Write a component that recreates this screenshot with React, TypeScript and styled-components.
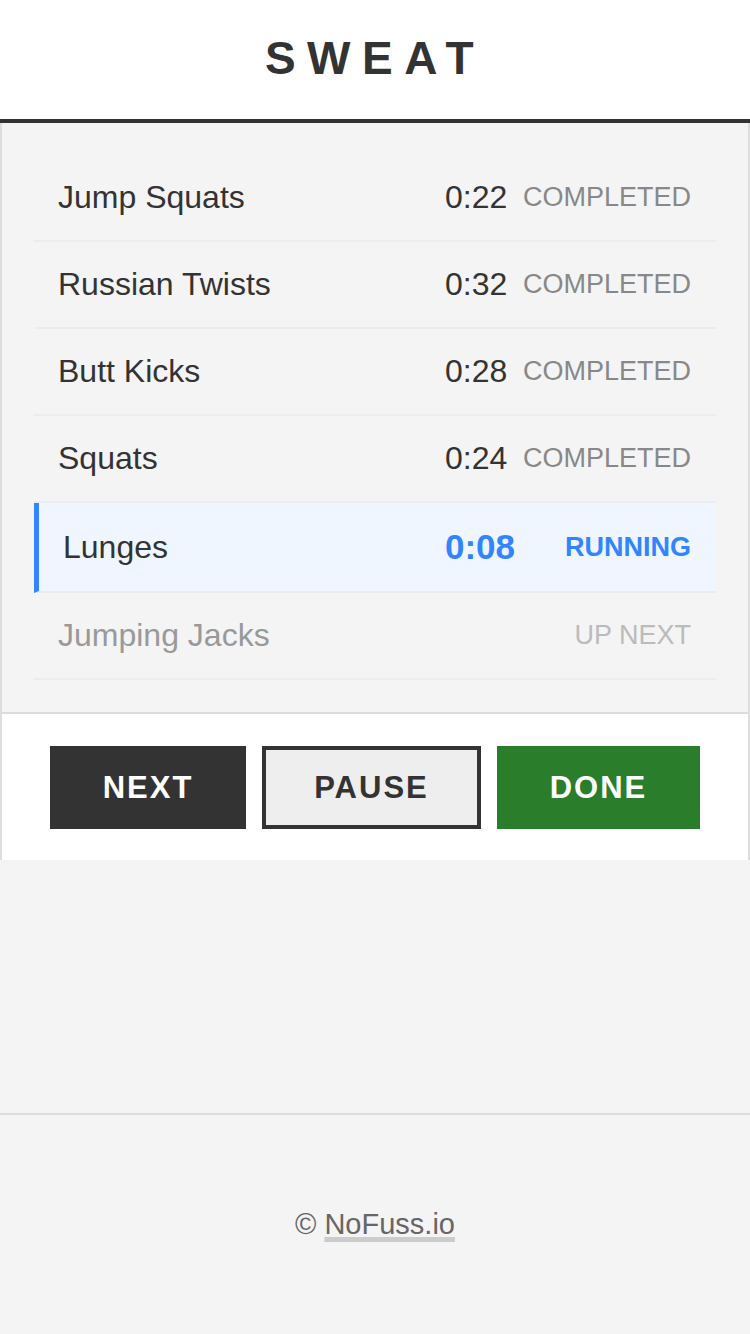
import { createGlobalStyle } from "styled-components";
import styled, { css } from "styled-components";

type Status = "completed" | "running" | "next";

interface Exercise {
  name: string;
  time?: string;
  status: Status;
}

const exercises: Exercise[] = [
  { name: "Jump Squats", time: "0:22", status: "completed" },
  { name: "Russian Twists", time: "0:32", status: "completed" },
  { name: "Butt Kicks", time: "0:28", status: "completed" },
  { name: "Squats", time: "0:24", status: "completed" },
  { name: "Lunges", time: "0:08", status: "running" },
  { name: "Jumping Jacks", status: "next" },
];

const statusLabel: Record<Status, string> = {
  completed: "COMPLETED",
  running: "RUNNING",
  next: "UP NEXT",
};

const GlobalStyle = createGlobalStyle`
  * { box-sizing: border-box; }
  html, body {
    margin: 0;
    padding: 0;
    background: #f4f4f4;
    font-family: "Liberation Sans", Arial, sans-serif;
    color: #333;
  }
`;

const Page = styled.div`
  min-height: 100vh;
  display: flex;
  flex-direction: column;
`;

const Header = styled.header`
  height: 123px;
  background: #fff;
  border-bottom: 4px solid #333;
  display: flex;
  align-items: center;
  justify-content: center;
`;

const Title = styled.h1`
  margin: 0 0 4px;
  font-size: 46px;
  font-weight: 700;
  letter-spacing: 0.25em;
  color: #333;
`;

const Main = styled.main`
  flex: 1;
`;

const Panel = styled.section`
  border-left: 2px solid #ddd;
  border-right: 2px solid #ddd;
  background: #f4f4f4;
`;

const List = styled.ul`
  list-style: none;
  margin: 0;
  padding: 32px;
`;

const Row = styled.li<{ $status: Status }>`
  display: grid;
  grid-template-columns: 1fr 78px 168px;
  align-items: center;
  height: 87px;
  padding: 0 25px 0 24px;
  border-bottom: 2px solid #ececec;

  ${(p) =>
    p.$status === "running" &&
    css`
      height: 90px;
      background: #eff6ff;
      border-left: 5px solid #3385ff;
    `}
`;

const Name = styled.span<{ $status: Status }>`
  font-size: 32px;
  color: ${(p) => (p.$status === "next" ? "#999" : "#333")};
`;

const Time = styled.span<{ $status: Status }>`
  font-size: 32px;
  color: #333;

  ${(p) =>
    p.$status === "running" &&
    css`
      font-size: 35px;
      font-weight: 700;
      color: #3385ff;
    `}
`;

const StatusText = styled.span<{ $status: Status }>`
  font-size: 27px;
  text-align: right;
  color: ${(p) =>
    p.$status === "running" ? "#3385ff" : p.$status === "next" ? "#bbb" : "#888"};
  font-weight: ${(p) => (p.$status === "running" ? 700 : 400)};
`;

const Controls = styled.div`
  display: grid;
  grid-template-columns: 196fr 219fr 203fr;
  gap: 16px;
  padding: 32px 48px 31px;
  background: #fff;
  border-top: 2px solid #ddd;
`;

type Variant = "dark" | "outline" | "green";

const Button = styled.button<{ $variant: Variant }>`
  height: 83px;
  display: flex;
  align-items: center;
  justify-content: center;
  font-family: inherit;
  font-size: 31px;
  font-weight: 700;
  letter-spacing: 2px;
  border: none;
  cursor: pointer;

  ${(p) =>
    p.$variant === "dark" &&
    css`
      background: #333;
      color: #fff;
    `}
  ${(p) =>
    p.$variant === "outline" &&
    css`
      background: #eee;
      color: #333;
      border: 4px solid #333;
    `}
  ${(p) =>
    p.$variant === "green" &&
    css`
      background: #2a7d2b;
      color: #fff;
    `}
`;

const Footer = styled.footer`
  height: 221px;
  border-top: 2px solid #ddd;
  display: flex;
  align-items: center;
  justify-content: center;
  font-size: 29px;
  color: #666;
`;

const FooterLink = styled.a`
  color: #666;
  text-decoration: underline;
  text-decoration-color: #ccc;
  text-decoration-thickness: 5px;
  text-underline-offset: 3px;
  margin-left: 8px;
`;

export default function App() {
  return (
    <Page>
      <GlobalStyle />
      <Header>
        <Title>SWEAT</Title>
      </Header>
      <Main>
        <Panel>
          <List>
            {exercises.map((ex) => (
              <Row key={ex.name} $status={ex.status}>
                <Name $status={ex.status}>{ex.name}</Name>
                <Time $status={ex.status}>{ex.time}</Time>
                <StatusText $status={ex.status}>{statusLabel[ex.status]}</StatusText>
              </Row>
            ))}
          </List>
          <Controls>
            <Button $variant="dark">NEXT</Button>
            <Button $variant="outline">PAUSE</Button>
            <Button $variant="green">DONE</Button>
          </Controls>
        </Panel>
      </Main>
      <Footer>
        ©<FooterLink href="#">NoFuss.io</FooterLink>
      </Footer>
    </Page>
  );
}
